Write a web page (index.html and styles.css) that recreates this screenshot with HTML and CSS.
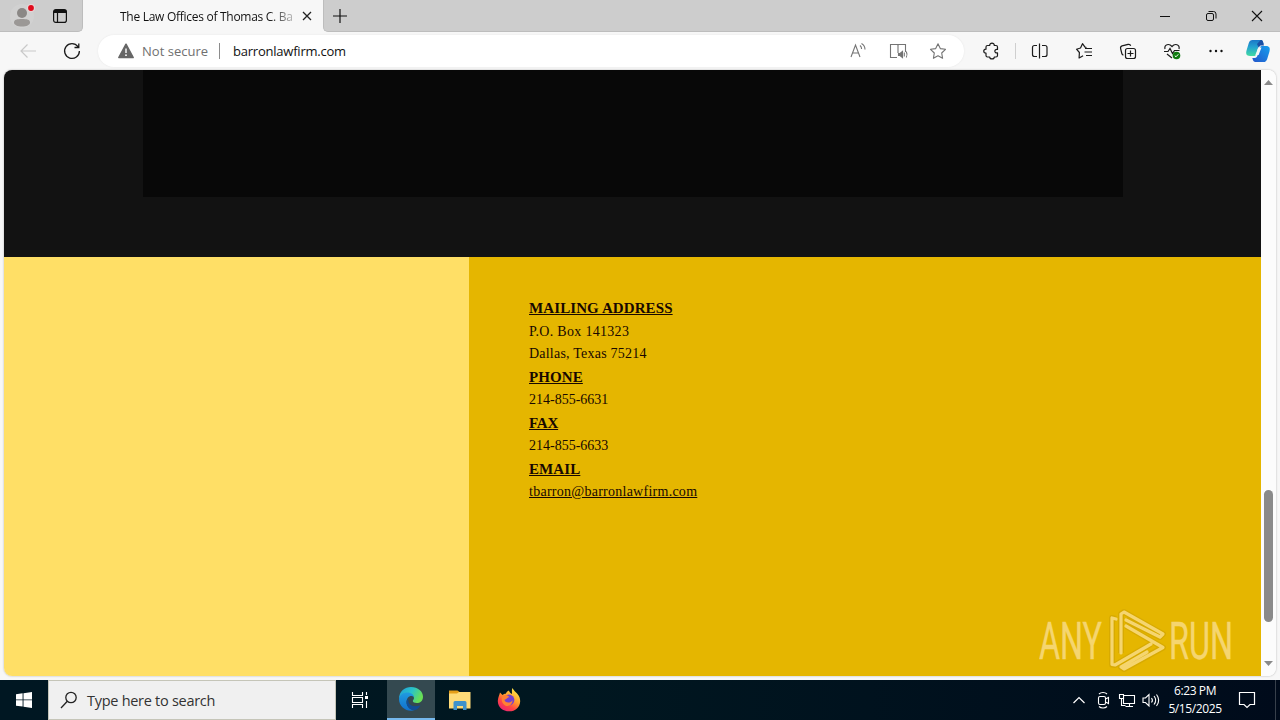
FILE: index.html
```html
<!DOCTYPE html>
<html lang="en">
<head>
<meta charset="utf-8">
<title>The Law Offices of Thomas C. Barron</title>
<link rel="stylesheet" href="styles.css">
</head>
<body>
<div class="screen">
  <header class="tabstrip">
    <div class="strip-left">
      <svg class="profile" width="28" height="28" viewBox="0 0 28 28"><circle cx="14" cy="14" r="12" fill="#d1d1d1"/><circle cx="14" cy="11" r="5" fill="#8b8886"/><path d="M6 20.500c0-3 3-3.500 8-3.500s8 .5 8 3.500c0 2.500-3.500 4-8 4s-8-1.500-8-4z" fill="#9b9896"/><circle cx="23" cy="6" r="4" fill="#e8d6d6"/><circle cx="23" cy="6" r="2.900" fill="#e00b1c"/></svg>
      <svg class="workspaces" width="16" height="16" viewBox="0 0 16 16" fill="none" stroke="#111" stroke-width="1.200"><rect x="1.600" y="1.600" width="12.800" height="12.800" rx="2.200"/><path d="M1.600 4.100h12.800M2 2.900h12" stroke-width="1.800"/><path d="M5.500 4v10"/></svg>
    </div>
    <div class="tab">
      <span class="tab-title">The Law Offices of Thomas C. Ba</span>
      <svg width="10" height="10" viewBox="0 0 10 10" stroke="#222" stroke-width="1.300"><path d="M1 1l8 8M9 1L1 9"/></svg>
    </div>
    <div class="strip-right">
      <svg width="14" height="14" viewBox="0 0 14 14" stroke="#111" stroke-width="1.200"><path d="M0 7h14M7 0v14"/></svg>
      <div class="window-buttons">
        <svg width="46" height="32" viewBox="0 0 46 32" stroke="#111"><path d="M18 16.500h10"/></svg>
        <svg width="46" height="32" viewBox="0 0 46 32" fill="none" stroke="#111"><rect x="18.500" y="13.500" width="7" height="7" rx="1.500"/><path d="M20.500 11.500h5a2.500 2.500 0 0 1 2.500 2.500v4.500"/></svg>
        <svg width="46" height="32" viewBox="0 0 46 32" stroke="#111" stroke-width="1.100"><path d="M18 11l10 10M28 11L18 21"/></svg>
      </div>
    </div>
  </header>
  <nav class="toolbar">
    <svg class="nav-icon" width="44" height="38" viewBox="0 0 44 38" fill="none" stroke="#c9c9c9" stroke-width="1.200"><path d="M36 19H20.500M27.500 12.500L21 19l6.500 6.500"/></svg>
    <svg class="nav-icon" width="44" height="38" viewBox="0 0 44 38" fill="none" stroke="#1b1b1b" stroke-width="1.300"><path d="M28 14.700A7.400 7.400 0 1 0 29.400 19M28.800 11.500v4H24.500"/></svg>
    <div class="address">
      <svg class="warning" width="16" height="16" viewBox="0 0 16 16"><path d="M8 1.200L15.200 14.500H.8z" fill="#666" stroke="#666" stroke-width="1.500" stroke-linejoin="round"/><path d="M8 5.500v4.500" stroke="#fff" stroke-width="1.400"/><circle cx="8" cy="12.200" r=".9" fill="#fff"/></svg>
      <span class="insecure">Not secure</span>
      <span class="divider"></span>
      <span class="url">barronlawfirm.com</span>
      <div class="address-actions">
        <svg width="40" height="32" viewBox="0 0 40 32" fill="none" stroke="#747474" stroke-width="1.100"><path d="M13 22l4.500-12 4.500 12M14.500 18h6M22 10.500c1.200 1 1.600 2 1.600 3.500M23.500 8.500c2.500 1.500 3.500 3.500 3.500 6"/></svg>
        <svg width="40" height="32" viewBox="0 0 40 32" fill="none" stroke="#747474" stroke-width="1.100"><path d="M19 22.500h-6.500V9.500h7l.5 1 .5-1h7V17M20 10v8"/><path d="M20.500 18.500h1.500l2.500-2v6l-2.500-2h-1.500z" fill="#747474"/><path d="M26.300 17.500v4M28.300 16.500c1 2 1 4 0 6"/></svg>
        <svg width="40" height="32" viewBox="0 0 40 32" fill="none" stroke="#747474" stroke-width="1.100" stroke-linejoin="round"><path d="M20 8.800l2.300 4.800 5.200.7-3.800 3.700.9 5.300-4.600-2.500-4.600 2.500.9-5.300-3.800-3.700 5.200-.7z"/></svg>
      </div>
    </div>
    <div class="tools">
      <svg class="extensions" width="44" height="38" viewBox="0 0 44 38" fill="none" stroke="#1b1b1b" stroke-width="1.200" stroke-linejoin="round"><path d="M18.500 13.500h2.200c-.2-3.200 4.800-3.200 4.600 0h1.700q1.500 0 1.500 1.500v2.400c-3.300-.8-3.800 4.200 0 3.500v2.600q0 1.500-1.500 1.500h-1.700c0 2.600-4.600 2.600-4.600 0h-2.200q-1.500 0-1.500-1.500v-2.300c-3 0-3-4.300 0-4v-2.200q0-1.500 1.500-1.500z"/></svg>
      <span class="tool-divider"></span>
      <svg width="44" height="38" viewBox="0 0 44 38" fill="none" stroke="#1b1b1b" stroke-width="1.200"><path d="M19 13.500h-2.500a2 2 0 0 0-2 2v7a2 2 0 0 0 2 2H19M24 13.500h3a2 2 0 0 1 2 2v7a2 2 0 0 1-2 2h-3M21.500 11.500v15"/></svg>
      <svg width="44" height="38" viewBox="0 0 44 38" fill="none" stroke="#1b1b1b" stroke-width="1.200" stroke-linejoin="round"><path d="M24.500 15.500l-1.500-.3-2.500-3.500-2 4.300-4 1.200 2.900 3.300-.3 5.500 4-2.200M23 16.500h7M22.500 20h7.500M24 23.500h6"/></svg>
      <svg width="44" height="38" viewBox="0 0 44 38" fill="none" stroke="#1b1b1b" stroke-width="1.200"><path d="M17.500 23c-1 0-1.500-.7-1.700-1.500l-1.200-5c-.3-1.500.3-2.300 1.500-2.600l6-1.500c1.300-.3 2.200.1 2.600 1.400"/><rect x="19.500" y="16.500" width="10" height="10" rx="2"/><path d="M24.500 18.500v6M21.500 21.500h6"/></svg>
      <svg width="44" height="38" viewBox="0 0 44 38" fill="none" stroke="#1b1b1b" stroke-width="1.200"><path d="M15 17c-1-4.500 4-6 7-2.500 3-3.500 8-2 7 2.500M14 19.500h4l2-3 2.500 5 2-3h5M17 22l5 4"/><circle cx="26.500" cy="23.500" r="3.800" fill="#107c10" stroke="none"/><path d="M24.800 23.700l1.200 1.100 2.300-2.500" stroke="#fff" stroke-width="1"/></svg>
      <svg width="44" height="38" viewBox="0 0 44 38" fill="#111"><circle cx="16.500" cy="19" r="1.200"/><circle cx="22" cy="19" r="1.200"/><circle cx="27.500" cy="19" r="1.200"/></svg>
      <svg width="40" height="38" viewBox="0 0 40 38">
        <defs><linearGradient id="cl" x1="0" y1="0" x2="0" y2="1"><stop offset="0" stop-color="#1b77c8"/><stop offset=".45" stop-color="#24a3d0"/><stop offset="1" stop-color="#42dba2"/></linearGradient><linearGradient id="cr" x1="0" y1="1" x2="1" y2="0"><stop offset="0" stop-color="#2456ca"/><stop offset="1" stop-color="#169fee"/></linearGradient></defs>
        <path d="M14.500 8h8.200c2.300 0 2.300 2.200 3 3.900h-2.200c-2.200 0-2.700 1.500-3.300 3.500L18.300 22c-.5 1.800-1.500 2-3.300 2h-3c-3.700 0-4.400-2.300-3.400-5.700l2.200-7.200C11.400 9 12.600 8 14.500 8z" fill="url(#cl)"/>
        <path d="M25.500 30h-8.200c-2.300 0-2.300-2.200-3-3.900h2.200c2.200 0 2.700-1.500 3.300-3.500l1.900-6.600c.5-1.800 1.500-2 3.300-2h3c3.700 0 4.400 2.300 3.400 5.700l-2.200 7.200c-.6 2.100-1.800 3.100-3.700 3.100z" fill="url(#cr)"/><path d="M22.700 8c2.300 0 2.300 2.200 3.300 5.500h-3.500c-1 .4-1.300 1.500-1.700 2.500L19 12z" fill="#1a4fa5"/><path d="M20.300 15.500h3.200L20.600 23h-3.200z" fill="#f7f7f7"/>
      </svg>
    </div>
  </nav>
  <div class="viewport">
    <main class="page">
      <section class="hero"><div class="hero-panel"></div></section>
      <section class="contact">
        <div class="contact-side"></div>
        <div class="contact-body">
          <h4 class="mailing">MAILING ADDRESS</h4>
          <p class="po-box">P.O. Box 141323</p>
          <p class="city">Dallas, Texas 75214</p>
          <h4>PHONE</h4>
          <p class="number">214-855-6631</p>
          <h4 class="fax">FAX</h4>
          <p class="number">214-855-6633</p>
          <h4>EMAIL</h4>
          <p class="email"><a>tbarron@barronlawfirm.com</a></p>
        </div>
      </section>
    </main>
    <div class="scrollbar">
      <svg width="15" height="26" viewBox="0 0 15 26"><path d="M3 15l4.500-5 4.500 5z" fill="#8a8a8a"/></svg>
      <div class="track"><div class="thumb"></div></div>
      <svg width="15" height="26" viewBox="0 0 15 26"><path d="M3 11l4.500 5 4.500-5z" fill="#8a8a8a"/></svg>
    </div>
  </div>
  <footer class="taskbar">
    <div class="start"><svg width="16" height="16" viewBox="0 0 16 16" fill="#fff"><path d="M0 2.300L6.600 1.300v6.200H0zM7.500 1.200L16 0v7.500H7.500zM0 8.300h6.600v6.300L0 13.700zM7.500 8.300H16V16l-8.500-1.200z"/></svg></div>
    <div class="search">
      <svg width="18" height="18" viewBox="0 0 18 18" fill="none" stroke="#222" stroke-width="1.300"><circle cx="11" cy="6.500" r="5.200"/><path d="M7.300 10.300L1 17"/></svg>
      <span>Type here to search</span>
    </div>
    <div class="apps">
      <svg width="48" height="40" viewBox="0 0 48 40" fill="none" stroke="#fff" stroke-width="1.100"><path d="M13.500 12v3.500h10V12M13.500 28v-3.500h10V28M13.500 17.500h10v5h-10zM27.500 12v3M27.500 21v7"/><path d="M26 16h3v3h-3z" fill="#fff" stroke="none"/></svg>
      <div class="app-active">
        <svg width="24" height="24" viewBox="0 0 24 24"><defs><linearGradient id="e1" x1="0" y1="0" x2="1" y2=".4"><stop offset="0" stop-color="#219bd9"/><stop offset=".55" stop-color="#29c3c9"/><stop offset="1" stop-color="#68df55"/></linearGradient><linearGradient id="e2" x1="0" y1="0" x2="0" y2="1"><stop offset="0" stop-color="#209be0"/><stop offset="1" stop-color="#1170cd"/></linearGradient></defs><path d="M0 12C0 4 6 0 12 0c7 0 12 4.500 12 9.700 0 4.300-3 6.300-6.200 6.300-2.400 0-4-.8-4-2 0-.8 1.200-1.200 1.200-3 0-2-2-3.700-4.700-3.700C6 7.300 1.500 8.500 0 12z" fill="url(#e1)"/><path d="M0 12c.8-4.500 4.600-6.500 8.500-6.500 3.900 0 6.500 2.600 6.500 5-.5-1-1.500-1.500-2.700-1.500-2.800 0-4.800 2.700-4.800 6 0 4.500 3.500 8 8 8.300C8 25.500 0 20 0 12z" fill="url(#e2)"/><path d="M9.500 12c-1 6 4 8.700 12 6.300-1.500 3-4 4.500-6 5-4.500-.3-8-3.800-8-8 0-1.500.8-2.800 2-3.300z" fill="#124d94"/></svg>
      </div>
      <svg width="49" height="40" viewBox="0 0 49 40"><path d="M14 10.500h8.500l2 1.500H35v3H14z" fill="#e59e19"/><path d="M14 13.500h8l2-1.500h11.500v16.500H14z" fill="#ffdb78"/><path d="M18.500 22.500q0-1.500 1.500-1.500h10q1.500 0 1.500 1.500V30H28v-4h-6v4h-3.500z" fill="#3f92cc"/></svg>
      <svg width="48" height="40" viewBox="0 0 48 40"><defs><linearGradient id="ff" x1=".8" y1="0" x2=".2" y2="1"><stop offset="0" stop-color="#fff04a"/><stop offset=".45" stop-color="#ff982e"/><stop offset=".7" stop-color="#ff4543"/><stop offset="1" stop-color="#e82078"/></linearGradient></defs><path d="M16 12.500l2.500 2.500c1-.9 2-1.300 3.200-1.300 1-2 2-2.700 3.300-3.200.2 2 2 3 3 3.500 0-2.500-.5-4.500.5-6 1 3 5.500 5 7 9.300 2.700 7.700-3 14-10.200 14-7.500 0-12.800-6-11.200-12.500.3-1.800 1.100-3.300 1.900-6.300z" fill="url(#ff)"/><circle cx="25" cy="20" r="5.400" fill="#7540cf"/><path d="M18.500 16c2-1.700 5-1.200 7 1.300-2.500 0-2.300 2-5 2.400 0 2.600 5.200 4.400 8.200.5-.5 5-4.400 6.800-7.600 5.300-3-1.500-4.300-6-2.600-9.500z" fill="#ff8133"/></svg>
    </div>
    <div class="tray">
      <svg width="24" height="40" viewBox="0 0 24 40" fill="none" stroke="#fff" stroke-width="1.200"><path d="M6.500 23l5.500-5.500 5.500 5.500"/></svg>
      <svg width="24" height="40" viewBox="0 0 24 40" fill="none" stroke="#fff" stroke-width="1.100"><rect x="7.500" y="16.500" width="7" height="8" rx="1.500"/><path d="M14.500 19l3-1.500v6l-3-1.500M8 14c2-2 6-2 8 0M8 26.500c2 2 6 2 8 0"/></svg>
      <svg width="24" height="40" viewBox="0 0 24 40" fill="none" stroke="#fff" stroke-width="1.100"><path d="M8.500 15.500h11v8h-11zM14.500 23.500v3M10.500 26.500H18M6.500 19v6.500h4"/><path d="M4.500 14.500h4v4h-4z" fill="#071521"/></svg>
      <svg width="24" height="40" viewBox="0 0 24 40" fill="none" stroke="#fff" stroke-width="1.100"><path d="M4 18h2.500l3.500-3.500v11.500L6.500 22.500H4zM12.500 18c1.200 1.500 1.200 3 0 4.500M15 16c2 2.500 2 6 0 8.500M17.500 14.500c2.700 3.500 2.700 8 0 11.500"/></svg>
      <div class="clock"><span class="time">6:23 PM</span><span class="date">5/15/2025</span></div>
      <svg class="notice" width="48" height="40" viewBox="0 0 48 40" fill="none" stroke="#fff" stroke-width="1.200"><path d="M16.500 12.500h15v12H27l-3 3-3-3h-4.500z"/></svg>
      <span class="desktop-edge"></span>
    </div>
  </footer>
  <svg class="watermark" width="220" height="73" viewBox="0 0 220 73">
    <g fill="none" stroke="#8a6a00" stroke-opacity=".15" stroke-width="6" stroke-linejoin="round"><path d="M77 12l-4-1v46.500l3 .5L112 37M82 46V7l3-2 39 22-3 3-34-17M87 19l37 21.500L85 62l-3-2 26-15"/></g>
    <g fill="none" stroke="#f5d56f" stroke-width="3.200" stroke-linejoin="round" stroke-linecap="round"><path d="M77 12l-4-1v46.500l3 .5L112 37M82 46V7l3-2 39 22-3 3-34-17M87 19l37 21.500L85 62l-3-2 26-15"/></g>
    <g class="watermark-text"><text x="0" y="52" textLength="63" lengthAdjust="spacingAndGlyphs">ANY</text><text x="130" y="52" textLength="64" lengthAdjust="spacingAndGlyphs">RUN</text></g>
  </svg>
</div>
</body>
</html>
```
FILE: styles.css
```css
* { box-sizing: border-box; }
body { margin: 0; overflow: hidden; font-family: "Open Sans", "Noto Sans", sans-serif; }
svg { display: block; flex: none; }
.screen { width: 1280px; height: 720px; display: flex; flex-direction: column; position: relative; background: #f7f7f7; }
.tabstrip { height: 32px; display: flex; background: #f7f7f7; }
.strip-left { width: 83px; display: flex; align-items: center; padding-left: 8px; gap: 16px; background: #cdcdcd; border-radius: 0 0 5px 0; border-bottom: 1px solid #bdbdbd; border-right: 1px solid #bdbdbd; }
.profile { margin-top: 1px; }
.tab { width: 240px; display: flex; align-items: center; padding-left: 37px; gap: 8px; }
.tab-title { width: 174px; white-space: nowrap; overflow: hidden; font-size: 12px; letter-spacing: -.28px; background: linear-gradient(90deg, #111 85%, #bbb 100%); background-clip: text; -webkit-background-clip: text; color: transparent; }
.strip-right { flex: 1; display: flex; align-items: center; justify-content: space-between; padding-left: 9px; background: #cdcdcd; border-radius: 0 0 0 5px; border-bottom: 1px solid #bdbdbd; border-left: 1px solid #bdbdbd; }
.window-buttons { display: flex; }
.toolbar { height: 38px; display: flex; align-items: center; }
.nav-icon + .nav-icon { margin-left: 6px; }
.address { width: 866px; height: 32px; margin-left: 4px; border-radius: 16px; background: #fff; display: flex; align-items: center; padding-left: 20px; box-shadow: 0 0 2px #e5e5e5; font-size: 13px; }
.insecure { width: 66px; margin-left: 8px; color: #707070; white-space: nowrap; letter-spacing: .02px; }
.divider { width: 1px; height: 16px; margin-left: 11px; background: #8c8c8c; }
.url { margin-left: 13px; color: #111; letter-spacing: -.22px; }
.address-actions { display: flex; margin-left: auto; margin-right: 6px; }
.tools { display: flex; align-items: center; }
.extensions { margin-left: 5px; }
.tool-divider { width: 1px; height: 16px; margin: 0 2px; background: #cfcfcf; }
.viewport { height: 606px; margin: 0 4px; display: flex; background: #fff; border-radius: 8px; overflow: hidden; box-shadow: 0 0 2px #aaa; }
.page { width: 1257px; }
.hero { height: 187px; padding: 0 138px 60px 139px; background: #121212; }
.hero-panel { height: 127px; background: #080808; }
.contact { height: 419px; display: flex; }
.contact-side { width: 465px; background: #ffdf66; }
.contact-body { flex: 1; background: #e5b600; padding: 40px 60px; color: #180800; font-family: "Liberation Serif", "Times New Roman", serif; }
.contact-body h4, .contact-body p { margin: 0; width: max-content; height: 23px; line-height: 23px; white-space: nowrap; }
.contact-body h4 { font-size: 15px; letter-spacing: .1px; text-decoration: underline; }
.contact-body .fax { letter-spacing: -.2px; }
.contact-body p { font-size: 14px; line-height: 22px; }
.contact-body .po-box { line-height: 23px; letter-spacing: .3px; }
.city { letter-spacing: .22px; }
.email { letter-spacing: .26px; }
.contact-body a { text-decoration: underline; }
.scrollbar { width: 15px; display: flex; flex-direction: column; background: #fcfcfc; }
.track { flex: 1; padding: 394px 3px 0; }
.thumb { height: 132px; width: 9px; border-radius: 5px; background: #8a8a8a; }
.taskbar { height: 40px; margin-top: 4px; display: flex; background: linear-gradient(90deg, #001722 0, #001720 45%, #000b1b 100%); }
.start { width: 48px; display: flex; align-items: center; justify-content: center; }
.search { width: 288px; display: flex; align-items: center; padding-left: 11px; gap: 9px; background: #f0f0f0; border: 1px solid #c5c5b8; color: #333; font-size: 14.500px; letter-spacing: -.28px; }
.apps { display: flex; padding-left: 3px; }
.app-active { width: 48px; display: flex; align-items: center; justify-content: center; background: #344950; border-bottom: 2px solid #76b9ed; }
.tray { display: flex; margin-left: auto; color: #fff; }
.clock { width: 64px; display: flex; flex-direction: column; align-items: center; padding-top: 2px; font-size: 12px; line-height: 18px; letter-spacing: -.4px; }
.notice { margin-left: -4px; }
.desktop-edge { width: 5px; margin-left: 4px; border-left: 1px solid #37404b; }
.watermark { position: absolute; left: 1039px; top: 607px; }
.watermark-text { font: 51px "Roboto", sans-serif; fill: #f5d56f; stroke: #f5d56f; stroke-width: .4px; }
```
